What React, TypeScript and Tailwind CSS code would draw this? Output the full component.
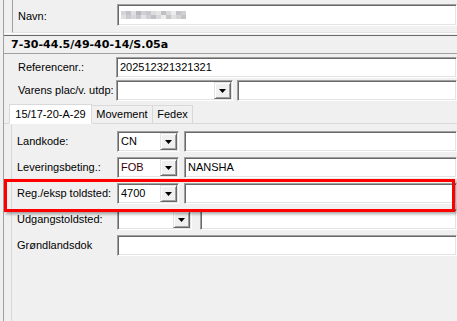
import React from 'react';

const sunken =
  'bg-white border border-t-[#a0a0a0] border-l-[#a0a0a0] border-r-white border-b-white shadow-[inset_1px_1px_0_#696969,inset_-1px_-1px_0_#e3e3e3]';

const Sunken: React.FC<{ className?: string; children?: React.ReactNode }> = ({ className = '', children }) => (
  <div className={`${sunken} h-[21px] flex items-center pl-[3px] ${className}`}>{children}</div>
);

const Combo: React.FC<{ w: string; value?: string; valueClass?: string }> = ({ w, value, valueClass = 'text-black' }) => (
  <div className={`${sunken} h-[21px] flex items-center ${w}`}>
    <span className={`flex-1 pl-[3px] ${valueClass}`}>{value}</span>
    <div className="w-[17px] h-[17px] mr-px flex items-center justify-center bg-[#f0f0f0] border border-t-[#e3e3e3] border-l-[#e3e3e3] border-r-[#696969] border-b-[#696969] shadow-[inset_1px_1px_0_#fff,inset_-1px_-1px_0_#a0a0a0]">
      <svg width="7" height="4" viewBox="0 0 7 4">
        <path d="M0 0h7L3.5 4z" fill="#000" />
      </svg>
    </div>
  </div>
);

// pixelated blur over the name field
const blur = [
  ['#d4d4d8', '#c4c4c8', '#e0e0e0', '#b8b8c0', '#d0d0d4', '#c8c8cc', '#dcdcdc', '#e4e4e4', '#c0c0c4', '#d8d8d8', '#ececec', '#c4c4c8', '#d0d0d0'],
  ['#e0e0e0', '#cccccc', '#d8d8dc', '#c8c8cc', '#e4e4e4', '#d0d0d4', '#c0c0c4', '#d8d8d8', '#ececec', '#c8c8cc', '#e0e0e0', '#d4d4d8', '#c4c4c4'],
];

const Row: React.FC<{ label: string; children: React.ReactNode }> = ({ label, children }) => (
  <div className="flex items-center h-[21px]">
    <span className="w-[105px] pl-[5px] shrink-0">{label}</span>
    {children}
  </div>
);

export default function App() {
  return (
    <div className="w-[457px] h-[321px] bg-[#f0f0f0] relative overflow-hidden font-['Liberation_Sans',Arial,sans-serif] text-[11px] text-black leading-none">
      <div className="h-full ml-[3px] border-l border-l-[#a0a0a0] flex flex-col">
        {/* top panel */}
        <div className="h-[33px] flex shrink-0">
          <div className="w-[8px]" />
          <div className="flex-1 border-l border-l-[#a0a0a0] border-b border-b-[#e3e3e3] flex items-start pt-[4px]">
            <span className="w-[104px] pl-[5px] mt-[7px]">Navn:</span>
            <div className={`${sunken} flex-1 h-[22px] flex items-center pl-[3px]`}>
              <div className="flex flex-col">
                {blur.map((r, i) => (
                  <div key={i} className="flex">
                    {r.map((c, j) => (
                      <div key={j} className="w-[5px] h-[4px]" style={{ background: c }} />
                    ))}
                  </div>
                ))}
              </div>
            </div>
          </div>
        </div>
        <div className="h-[3px] shrink-0 border-t border-t-white border-b border-b-[#696969]" />

        {/* header */}
        <div className="h-[18px] shrink-0 flex items-center pl-[7px] border-b border-b-[#a0a0a0] font-['DejaVu_Sans',Verdana,sans-serif] font-bold text-[11px]">
          7-30-44.5/49-40-14/S.05a
        </div>

        {/* reference rows */}
        <div className="flex items-center h-[21px] mt-[3px] shrink-0">
          <span className="w-[112px] pl-[14px] shrink-0">Referencenr.:</span>
          <Sunken className="flex-1">202512321321321</Sunken>
        </div>
        <div className="flex items-center h-[21px] mt-[2px] shrink-0">
          <span className="w-[112px] pl-[14px] shrink-0">Varens plac/v. utdp:</span>
          <Combo w="w-[117px]" />
          <Sunken className="flex-1 ml-[4px]" />
        </div>

        {/* tabs */}
        <div className="h-[23px] shrink-0 flex items-end pl-[5px] border-b border-b-[#d9d9d9]">
          <div className="w-[83px] h-[20px] -mb-px bg-white border border-[#d9d9d9] border-b-white flex items-center justify-center">
            15/17-20-A-29
          </div>
          <div className="w-[61px] h-[18px] bg-[#f0f0f0] border border-l-0 border-b-0 border-[#d9d9d9] flex items-center justify-center">
            Movement
          </div>
          <div className="w-[40px] h-[18px] bg-[#f0f0f0] border border-l-0 border-b-0 border-[#d9d9d9] flex items-center justify-center">
            Fedex
          </div>
        </div>

        {/* tab panel */}
        <div className="flex-1 ml-[7px] border-l border-l-[#d9d9d9] pt-[7px] flex flex-col gap-[5px]">
          <Row label="Landkode:">
            <Combo w="w-[62px]" value="CN" />
            <Sunken className="flex-1 ml-[5px]" />
          </Row>
          <Row label="Leveringsbeting.:">
            <Combo w="w-[62px]" value="FOB" valueClass="text-[#3a0008]" />
            <Sunken className="flex-1 ml-[5px]">NANSHA</Sunken>
          </Row>
          <Row label="Reg./eksp toldsted:">
            <Combo w="w-[62px]" value="4700" />
            <Sunken className="flex-1 ml-[5px]" />
          </Row>
          <Row label="Udgangstoldsted:">
            <Combo w="w-[75px]" />
            <Sunken className="flex-1 ml-[8px]" />
          </Row>
          <Row label="Grøndlandsdok">
            <Sunken className="flex-1" />
          </Row>
        </div>
      </div>

      {/* highlight frame */}
      <div className="absolute left-[4px] top-[179px] w-[451px] h-[33px] border-[3px] border-[#ff0000] shadow-[2px_2px_3px_rgba(0,0,0,0.35)]" />
    </div>
  );
}
